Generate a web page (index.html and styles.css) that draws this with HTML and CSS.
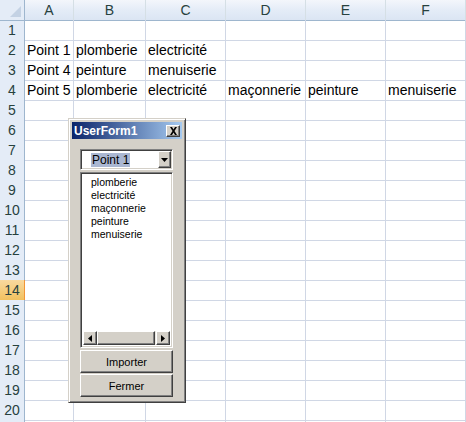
FILE: index.html
```html
<!DOCTYPE html>
<html>
<head>
<meta charset="utf-8">
<link rel="stylesheet" href="styles.css">
</head>
<body>
<div class="sheet">
  <div class="row hdr"><div class="corner"><span class="tri"></span></div><div class="ch">A</div><div class="ch">B</div><div class="ch">C</div><div class="ch">D</div><div class="ch">E</div><div class="ch">F</div></div>
  <div class="row"><div class="rh">1</div><div class="c"></div><div class="c"></div><div class="c"></div><div class="c"></div><div class="c"></div><div class="c"></div></div>
  <div class="row"><div class="rh">2</div><div class="c">Point 1</div><div class="c">plomberie</div><div class="c">electricité</div><div class="c"></div><div class="c"></div><div class="c"></div></div>
  <div class="row"><div class="rh">3</div><div class="c">Point 4</div><div class="c">peinture</div><div class="c">menuiserie</div><div class="c"></div><div class="c"></div><div class="c"></div></div>
  <div class="row"><div class="rh">4</div><div class="c">Point 5</div><div class="c">plomberie</div><div class="c">electricité</div><div class="c">maçonnerie</div><div class="c">peinture</div><div class="c">menuiserie</div></div>
  <div class="row"><div class="rh">5</div><div class="c"></div><div class="c"></div><div class="c"></div><div class="c"></div><div class="c"></div><div class="c"></div></div>
  <div class="row"><div class="rh">6</div><div class="c"></div><div class="c"></div><div class="c"></div><div class="c"></div><div class="c"></div><div class="c"></div></div>
  <div class="row"><div class="rh">7</div><div class="c"></div><div class="c"></div><div class="c"></div><div class="c"></div><div class="c"></div><div class="c"></div></div>
  <div class="row"><div class="rh">8</div><div class="c"></div><div class="c"></div><div class="c"></div><div class="c"></div><div class="c"></div><div class="c"></div></div>
  <div class="row"><div class="rh">9</div><div class="c"></div><div class="c"></div><div class="c"></div><div class="c"></div><div class="c"></div><div class="c"></div></div>
  <div class="row"><div class="rh">10</div><div class="c"></div><div class="c"></div><div class="c"></div><div class="c"></div><div class="c"></div><div class="c"></div></div>
  <div class="row"><div class="rh">11</div><div class="c"></div><div class="c"></div><div class="c"></div><div class="c"></div><div class="c"></div><div class="c"></div></div>
  <div class="row"><div class="rh">12</div><div class="c"></div><div class="c"></div><div class="c"></div><div class="c"></div><div class="c"></div><div class="c"></div></div>
  <div class="row"><div class="rh">13</div><div class="c"></div><div class="c"></div><div class="c"></div><div class="c"></div><div class="c"></div><div class="c"></div></div>
  <div class="row"><div class="rh sel">14</div><div class="c"></div><div class="c"></div><div class="c"></div><div class="c"></div><div class="c"></div><div class="c"></div></div>
  <div class="row"><div class="rh">15</div><div class="c"></div><div class="c"></div><div class="c"></div><div class="c"></div><div class="c"></div><div class="c"></div></div>
  <div class="row"><div class="rh">16</div><div class="c"></div><div class="c"></div><div class="c"></div><div class="c"></div><div class="c"></div><div class="c"></div></div>
  <div class="row"><div class="rh">17</div><div class="c"></div><div class="c"></div><div class="c"></div><div class="c"></div><div class="c"></div><div class="c"></div></div>
  <div class="row"><div class="rh">18</div><div class="c"></div><div class="c"></div><div class="c"></div><div class="c"></div><div class="c"></div><div class="c"></div></div>
  <div class="row"><div class="rh">19</div><div class="c"></div><div class="c"></div><div class="c"></div><div class="c"></div><div class="c"></div><div class="c"></div></div>
  <div class="row"><div class="rh">20</div><div class="c"></div><div class="c"></div><div class="c"></div><div class="c"></div><div class="c"></div><div class="c"></div></div>
  <div class="row"><div class="rh"></div><div class="c"></div><div class="c"></div><div class="c"></div><div class="c"></div><div class="c"></div><div class="c"></div></div>

  <div class="form">
    <div class="titlebar">
      <span class="title">UserForm1</span>
      <span class="close"><svg width="9" height="8" viewBox="0 0 9 8"><path d="M1 0h2l1.5 2.5L6 0h2L5.5 4 8 8H6L4.5 5.5 3 8H1l2.5-4z" fill="#000"/></svg></span>
    </div>
    <div class="body">
      <div class="combo">
        <span class="ctext"><span class="hl">Point 1</span></span>
        <span class="dd"><svg width="7" height="4" viewBox="0 0 7 4"><path d="M0 0h7L3.5 4z" fill="#000"/></svg></span>
      </div>
      <div class="list">
        <div class="items">
          <div>plomberie</div>
          <div>electricité</div>
          <div>maçonnerie</div>
          <div>peinture</div>
          <div>menuiserie</div>
        </div>
        <div class="hscroll">
          <span class="arrow"><svg width="4" height="7" viewBox="0 0 4 7"><path d="M4 0v7L0 3.5z" fill="#000"/></svg></span>
          <span class="thumb"></span>
          <span class="track"></span>
          <span class="arrow"><svg width="4" height="7" viewBox="0 0 4 7"><path d="M0 0v7L4 3.5z" fill="#000"/></svg></span>
        </div>
      </div>
      <div class="btn">Importer</div>
      <div class="btn">Fermer</div>
    </div>
  </div>
</div>
</body>
</html>
```
FILE: styles.css
```css
html, body {
  margin: 0;
  padding: 0;
  background: #fff;
  overflow: hidden;
}
.sheet {
  position: relative;
  width: 466px;
  height: 422px;
  font-family: "Liberation Sans", Arial, sans-serif;
}
.row {
  display: grid;
  grid-template-columns: 25px 49px 72px 80px 80px 80px 80px;
  height: 20px;
}
.c {
  box-sizing: border-box;
  border-right: 1px solid #d0d7e5;
  border-bottom: 1px solid #d0d7e5;
  font-size: 14px;
  line-height: 20px;
  padding-left: 2px;
  white-space: nowrap;
  color: #000;
}
.rh {
  box-sizing: border-box;
  border-right: 1px solid #9eb6ce;
  border-bottom: 1px solid #9eb6ce;
  background: #e4ecf7;
  color: #27413e;
  font-size: 14px;
  line-height: 20px;
  text-align: center;
}
.rh.sel {
  background: linear-gradient(#f9d99f, #f1c15f);
  border-bottom-color: #f29536;
  border-right-color: #f29536;
}
.hdr .ch {
  box-sizing: border-box;
  border-right: 1px solid #d5dfe5;
  border-bottom: 1px solid #9eb6ce;
  background: linear-gradient(#f3f6fb, #e4ecf7 50%, #dbe5f3);
  color: #27413e;
  font-size: 14px;
  line-height: 20px;
  text-align: center;
}
.corner {
  box-sizing: border-box;
  border-right: 1px solid #9eb6ce;
  border-bottom: 1px solid #9eb6ce;
  background: #e4ecf7;
  position: relative;
}
.tri {
  position: absolute;
  right: 3px;
  bottom: 3px;
  width: 0;
  height: 0;
  border-left: 11px solid transparent;
  border-bottom: 11px solid #c4d2e4;
}
/* UserForm window */
.form {
  position: absolute;
  left: 68px;
  top: 118px;
  width: 118px;
  height: 285px;
  box-sizing: border-box;
  background: #d4d0c8;
  border-top: 1px solid #d4d0c8;
  border-left: 1px solid #d4d0c8;
  border-right: 1px solid #404040;
  border-bottom: 1px solid #404040;
  box-shadow: inset 1px 1px 0 #fff, inset -1px -1px 0 #808080;
  padding: 3px 3px;
  display: flex;
  flex-direction: column;
  font-family: "Liberation Sans", Tahoma, sans-serif;
}
.titlebar {
  height: 17px;
  background: linear-gradient(90deg, #0a246a, #a6caf0);
  display: flex;
  align-items: center;
  justify-content: space-between;
  padding: 0 2px 0 2px;
}
.title {
  color: #fff;
  font-weight: bold;
  font-size: 12px;
  letter-spacing: 0;
}
.close {
  width: 14px;
  height: 12px;
  box-sizing: border-box;
  background: #d4d0c8;
  border-top: 1px solid #fff;
  border-left: 1px solid #fff;
  border-right: 1px solid #404040;
  border-bottom: 1px solid #404040;
  box-shadow: inset -1px -1px 0 #808080;
  display: flex;
  align-items: center;
  justify-content: center;
}
.body {
  display: flex;
  flex-direction: column;
  padding: 10px 9px 0 8px;
}
.combo {
  height: 21px;
  box-sizing: border-box;
  background: #fff;
  border-top: 1px solid #808080;
  border-left: 1px solid #808080;
  border-right: 1px solid #fff;
  border-bottom: 1px solid #fff;
  box-shadow: inset 1px 1px 0 #404040, inset -1px -1px 0 #d4d0c8;
  display: flex;
  align-items: center;
  justify-content: space-between;
  padding: 1px;
}
.ctext {
  font-size: 12px;
  padding-left: 9px;
}
.hl {
  background: #aab7d2;
  color: #000;
  padding: 0 1px;
}
.dd {
  width: 13px;
  height: 17px;
  box-sizing: border-box;
  background: #d4d0c8;
  border-top: 1px solid #fff;
  border-left: 1px solid #fff;
  border-right: 1px solid #404040;
  border-bottom: 1px solid #404040;
  box-shadow: inset -1px -1px 0 #808080;
  display: flex;
  align-items: center;
  justify-content: center;
}
.list {
  margin-top: 2px;
  height: 176px;
  box-sizing: border-box;
  background: #fff;
  border-top: 1px solid #808080;
  border-left: 1px solid #808080;
  border-right: 1px solid #fff;
  border-bottom: 1px solid #fff;
  box-shadow: inset 1px 1px 0 #404040, inset -1px -1px 0 #d4d0c8;
  padding: 2px 2px 2px 2px;
  display: flex;
  flex-direction: column;
  justify-content: space-between;
}
.items {
  font-size: 10.5px;
  line-height: 13px;
  padding-left: 8px;
  padding-top: 1px;
  color: #000;
}
.hscroll {
  height: 14px;
  display: flex;
  background: #ece9e2;
}
.arrow, .thumb {
  box-sizing: border-box;
  background: #d4d0c8;
  border-top: 1px solid #fff;
  border-left: 1px solid #fff;
  border-right: 1px solid #404040;
  border-bottom: 1px solid #404040;
  box-shadow: inset -1px -1px 0 #808080;
}
.arrow {
  width: 14px;
  display: flex;
  align-items: center;
  justify-content: center;
}
.thumb {
  width: 58px;
}
.track {
  flex: 1;
}
.btn {
  margin-top: 1px;
  height: 23px;
  box-sizing: border-box;
  background: #d4d0c8;
  border-top: 1px solid #fff;
  border-left: 1px solid #fff;
  border-right: 1px solid #404040;
  border-bottom: 1px solid #404040;
  box-shadow: inset -1px -1px 0 #808080;
  font-size: 11px;
  display: flex;
  align-items: center;
  justify-content: center;
  color: #000;
}
.list + .btn {
  margin-top: 2px;
}
```
